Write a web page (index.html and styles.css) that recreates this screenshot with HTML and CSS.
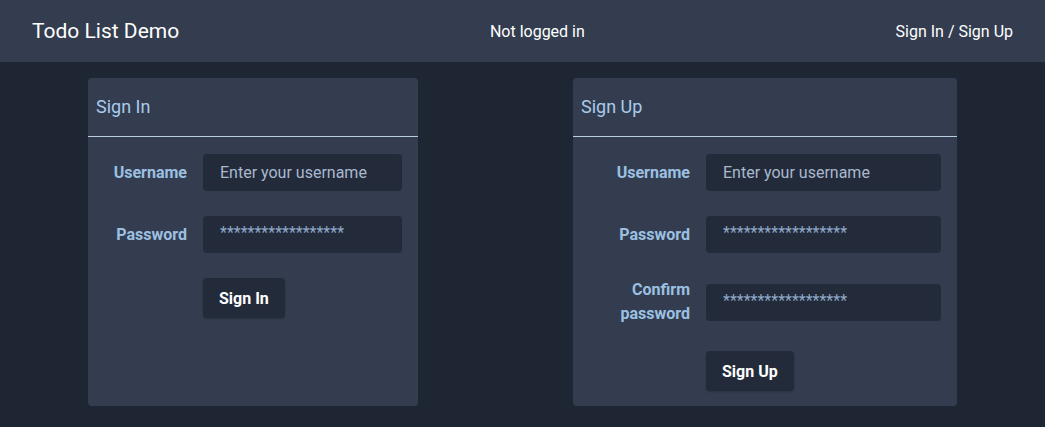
FILE: index.html
```html
<!DOCTYPE html>
<html lang="en">
<head>
<meta charset="utf-8">
<title>Todo List Demo</title>
<link rel="stylesheet" href="styles.css">
</head>
<body>
<header class="topbar">
  <div class="brand">Todo List Demo</div>
  <div class="status">Not logged in</div>
  <a class="nav-link" href="#">Sign In / Sign Up</a>
</header>
<main class="auth">
  <section class="card card-signin">
    <h2 class="card-title">Sign In</h2>
    <form class="form">
      <label class="label" for="si-user">Username</label>
      <input class="input" id="si-user" type="text" placeholder="Enter your username">
      <label class="label" for="si-pass">Password</label>
      <input class="input input-pass" id="si-pass" type="text" value="******************">
      <span></span>
      <div><button class="btn" type="button">Sign In</button></div>
    </form>
  </section>
  <section class="card card-signup">
    <h2 class="card-title">Sign Up</h2>
    <form class="form">
      <label class="label" for="su-user">Username</label>
      <input class="input" id="su-user" type="text" placeholder="Enter your username">
      <label class="label" for="su-pass">Password</label>
      <input class="input input-pass" id="su-pass" type="text" value="******************">
      <label class="label label-wrap" for="su-conf">Confirm password</label>
      <input class="input input-pass" id="su-conf" type="text" value="******************">
      <span></span>
      <div><button class="btn" type="button">Sign Up</button></div>
    </form>
  </section>
</main>
</body>
</html>
```
FILE: styles.css
```css
* { box-sizing: border-box; }
html, body { margin: 0; padding: 0; }
body {
  background: #1e2633;
  font-family: Roboto, "Liberation Sans", sans-serif;
  color: #fff;
  height: 427px;
  overflow: hidden;
}
.topbar {
  height: 62px;
  background: #333d4f;
  display: flex;
  align-items: center;
  justify-content: space-between;
  padding: 0 32px;
}
.brand { font-size: 21px; color: #fff; }
.status { font-size: 16px; color: #fff; }
.nav-link { font-size: 16px; color: #fff; text-decoration: none; }
.auth {
  display: flex;
  align-items: flex-start;
  padding: 16px 0 0 88px;
  gap: 155px;
}
.card {
  background: #333d4f;
  border-radius: 4px;
  height: 328px;
}
.card-signin { width: 330px; }
.card-signup { width: 384px; }
.card-title {
  margin: 0;
  height: 59px;
  padding: 0 8px 2px 8px;
  display: flex;
  align-items: center;
  font-size: 18px;
  font-weight: 400;
  color: #a9cbec;
  border-bottom: 1px solid #b9cde2;
}
.form {
  display: grid;
  column-gap: 16px;
  row-gap: 25px;
  padding: 17px 16px 0 16px;
  align-items: center;
}
.card-signin .form { grid-template-columns: 83px 199px; }
.card-signup .form { grid-template-columns: 101px 235px; }
.label {
  text-align: right;
  font-weight: 700;
  font-size: 16px;
  color: #9cc0e2;
  line-height: 24px;
}
.label-wrap { padding-left: 24px; }
.input {
  height: 37px;
  width: 100%;
  background: #232b3b;
  border: none;
  border-radius: 4px;
  padding: 0 17px;
  font-family: Roboto, "Liberation Sans", sans-serif;
  font-size: 16px;
  color: #a9b9cd;
  outline: none;
}
.input::placeholder { color: #a9b9cd; opacity: 1; }
.input-pass { color: #8fa9c9; padding-bottom: 4px; }
.btn {
  height: 40px;
  padding: 0 16px;
  background: #232b3b;
  border: none;
  border-radius: 4px;
  color: #fff;
  font-family: Roboto, "Liberation Sans", sans-serif;
  font-weight: 700;
  font-size: 16px;
  box-shadow: 0 1px 2px rgba(0,0,0,0.2);
  cursor: pointer;
}
```
